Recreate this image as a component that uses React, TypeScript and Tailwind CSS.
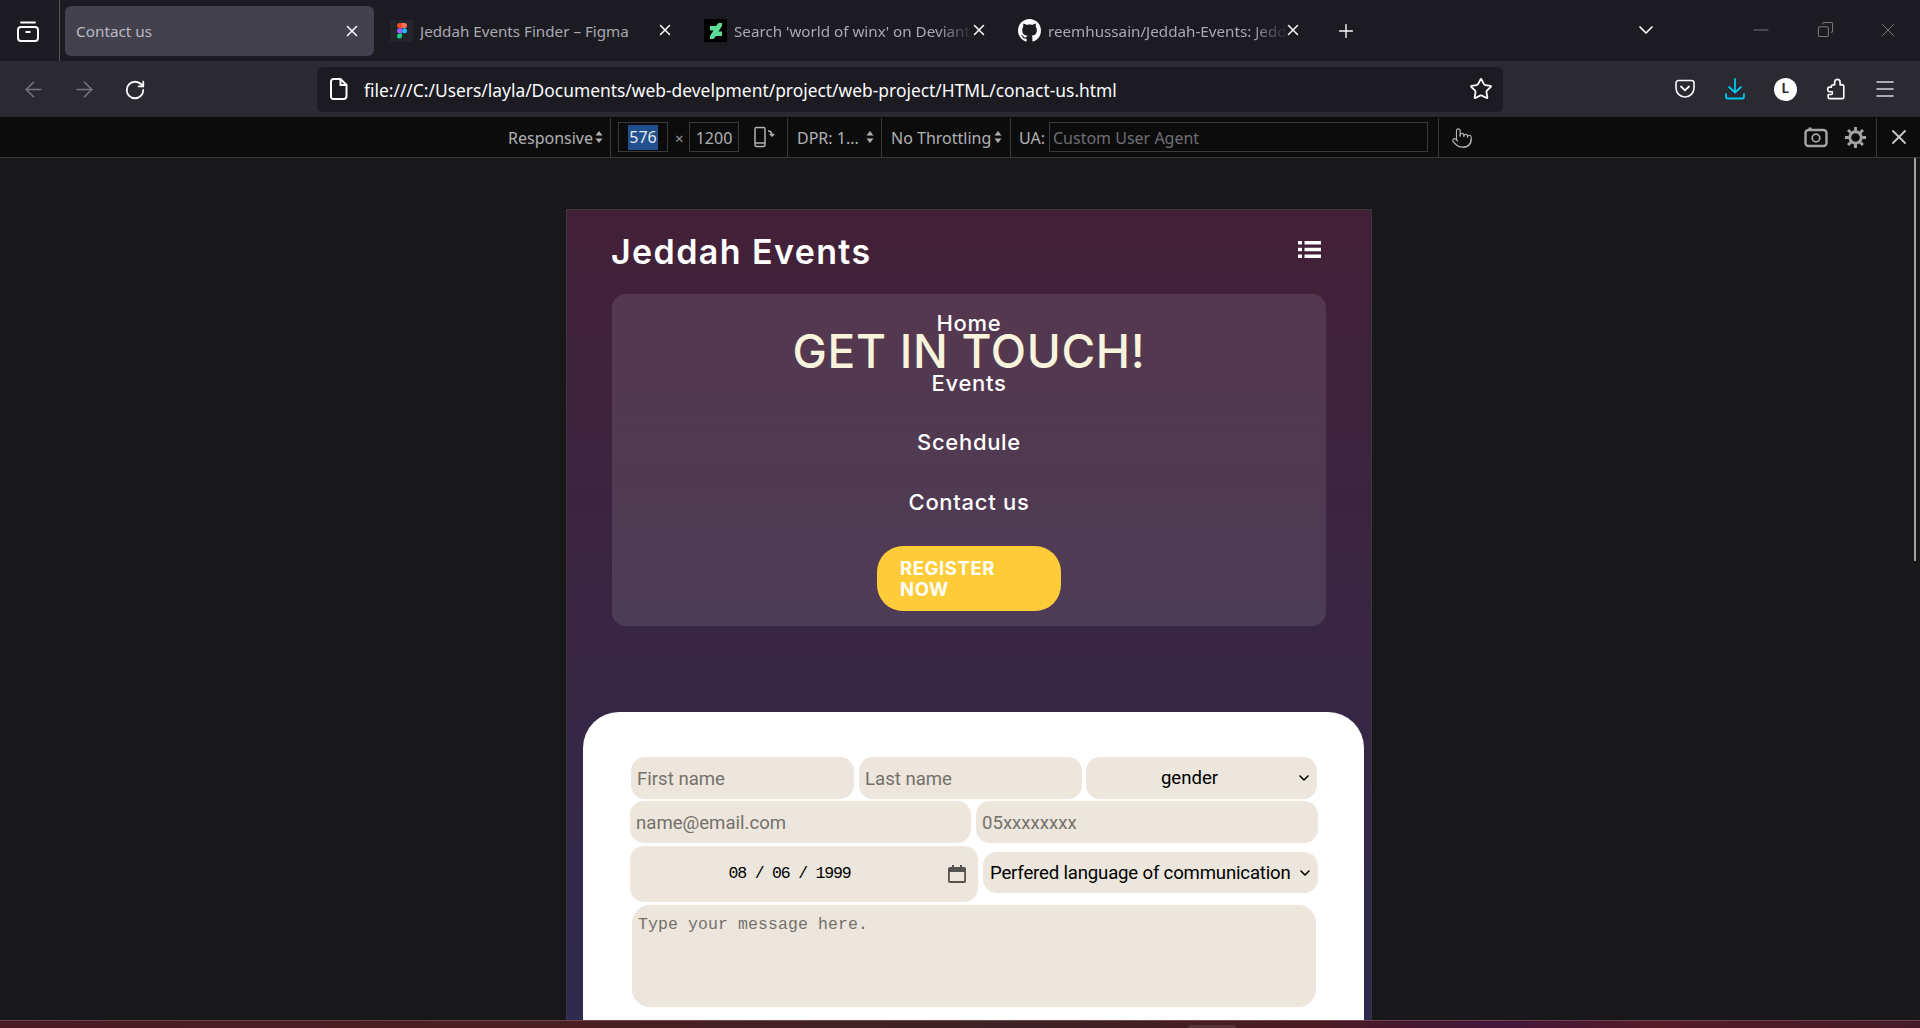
import { ChevronDown, Copy, Minus, Plus, RotateCw, Star, X, ArrowLeft, ArrowRight, Menu, Pointer } from "lucide-react";

const ui = { fontFamily: '"Noto Sans", "Open Sans", sans-serif' };
const narrow = { fontFamily: 'Roboto, "Noto Sans", sans-serif' };
const mono = { fontFamily: '"Liberation Mono", "DejaVu Sans Mono", monospace' };
const display = { fontFamily: 'Inter, "Open Sans", sans-serif' };

const UpDown = () => (
  <svg width="8" height="14" viewBox="0 0 8 14" fill="#b1b1b3" className="shrink-0">
    <path d="M4 1l3.500 4.500h-7zM4 13L.5 8.500h7z" />
  </svg>
);

const Divider = () => <div className="w-px h-[39px] bg-[#38383d] shrink-0" />;

const TabsIcon = () => (
  <svg width="24" height="24" viewBox="0 0 24 24" fill="none" stroke="#fbfbfe" strokeWidth="2" className="shrink-0">
    <path d="M5 3.500h14" strokeLinecap="round" />
    <rect x="2" y="8" width="20" height="14" rx="3" />
    <path d="M9.500 13h5" />
  </svg>
);

const FigmaIcon = () => (
  <div className="w-[23px] h-[22px] bg-[#24252a] flex items-center justify-center shrink-0">
    <svg width="10" height="16" viewBox="0 0 10 16">
      <path d="M2.500 0H5v5H2.500a2.500 2.500 0 010-5z" fill="#f24e1e" />
      <path d="M5 0h2.500a2.500 2.500 0 010 5H5z" fill="#ff7262" />
      <path d="M2.500 5.200H5v5H2.500a2.500 2.500 0 010-5z" fill="#a259ff" />
      <circle cx="7.500" cy="7.700" r="2.500" fill="#1abcfe" />
      <path d="M2.500 10.500H5V13a2.500 2.500 0 11-2.500-2.500z" fill="#0acf83" />
    </svg>
  </div>
);

const DeviantIcon = () => (
  <div className="w-[23px] h-[23px] bg-black flex items-center justify-center shrink-0">
    <svg width="12" height="16" viewBox="0 0 12 16" fill="#5fdc96">
      <path d="M12 0v3L8.500 8.500H12V13H6L3.500 16H0v-3l3.500-5.500H0V3h6l2.500-3z" />
    </svg>
  </div>
);

const GithubIcon = () => (
  <svg width="23" height="23" viewBox="0 0 16 16" fill="#fbfbfe" className="shrink-0">
    <path d="M8 0C3.580 0 0 3.580 0 8c0 3.540 2.290 6.530 5.470 7.590.4.070.55-.17.55-.38 0-.19-.01-.82-.01-1.490-2.010.37-2.530-.49-2.690-.94-.09-.23-.48-.94-.82-1.130-.28-.15-.68-.52-.01-.53.630-.01 1.080.58 1.230.82.720 1.210 1.870.870 2.330.660.070-.520.280-.870.510-1.070-1.780-.200-3.640-.890-3.640-3.950 0-.870.310-1.590.820-2.150-.080-.200-.360-1.020.080-2.120 0 0 .670-.210 2.200.820.640-.180 1.320-.270 2-.270s1.360.090 2 .270c1.530-1.040 2.200-.820 2.200-.820.440 1.100.160 1.920.080 2.120.510.560.820 1.270.820 2.150 0 3.070-1.870 3.750-3.650 3.950.290.250.540.730.540 1.480 0 1.070-.010 1.930-.010 2.200 0 .210.150.460.550.380A8.010 8.010 0 0016 8c0-4.420-3.580-8-8-8z" />
  </svg>
);

const tabs = [
  { title: "Jeddah Events Finder – Figma", icon: <FigmaIcon />, fade: false },
  { title: "Search 'world of winx' on DeviantArt", icon: <DeviantIcon />, fade: true },
  { title: "reemhussain/Jeddah-Events: Jeddah Events", icon: <GithubIcon />, fade: true },
];

const TabBar = () => (
  <div className="h-[61px] bg-[#1c1b22] flex items-stretch shrink-0">
    <div className="w-[60px] shrink-0 flex items-center justify-center border-r border-[#55555a] pr-[3px]">
      <TabsIcon />
    </div>
    <div className="w-[309px] h-[50px] mt-[6px] ml-[5px] mr-[16px] rounded-[6px] bg-[#42414d] flex items-center pl-[11px] pr-[13px] shrink-0">
      <span className="text-[15.300px] text-[#b9b9c2] flex-1">Contact us</span>
      <X size={18} className="text-[#fbfbfe]" />
    </div>
    {tabs.map((t) => (
      <div key={t.title} className="w-[314px] flex items-center shrink-0 pr-[44px] relative">
        {t.icon}
        <span className={`ml-[7px] pt-[2px] text-[15.200px] text-[#a9a9b0] whitespace-nowrap overflow-hidden flex-1 ${t.fade ? "[mask-image:linear-gradient(to_right,black_85%,transparent)]" : ""}`}>
          {t.title}
        </span>
        <X size={18} className="text-[#fbfbfe] absolute left-[266px] top-[21px]" />
      </div>
    ))}
    <div className="flex items-center ml-[4px] shrink-0 w-[28px]">
      <Plus size={22} strokeWidth={1.500} className="text-[#fbfbfe] -ml-[1px]" />
    </div>
    <div className="flex items-center ml-[270px] shrink-0 -mt-[2px]">
      <ChevronDown size={24} strokeWidth={1.700} className="text-[#fbfbfe]" />
    </div>
    <div className="flex items-center ml-[91px] gap-[44px] text-[#77777c] -mt-[2px]">
      <Minus size={24} strokeWidth={1} />
      <Copy size={17} strokeWidth={1.500} className="-scale-x-100" />
      <X size={24} strokeWidth={1} className="ml-[-2px]" />
    </div>
  </div>
);

const NavBar = () => (
  <div className="h-[56px] bg-[#2b2a33] flex items-center shrink-0">
    <ArrowLeft size={25} strokeWidth={1.500} className="text-[#77767e] ml-[21px] mt-[1px]" />
    <ArrowRight size={25} strokeWidth={1.500} className="text-[#77767e] ml-[26px] mt-[1px]" />
    <RotateCw size={22} strokeWidth={2} className="text-[#fbfbfe] ml-[27px] mt-[1px]" />
    <div className="w-[1186px] h-[45px] ml-[171px] rounded-[6px] bg-[#1c1b22] flex items-center shrink-0">
      <svg width="18" height="22" viewBox="0 0 18 22" fill="none" stroke="#fbfbfe" strokeWidth="2" className="ml-[13px] shrink-0">
        <path d="M3.500 1h7l6 6v11a3 3 0 01-3 3h-10a2.500 2.500 0 01-2.500-3V3.500A2.500 2.500 0 013.500 1z" />
        <path d="M10.500 1v6h6" />
      </svg>
      <span className="ml-[16px] pt-[2px] text-[17.400px] text-[#fbfbfe] whitespace-nowrap flex-1">file:///C:/Users/layla/Documents/web-develpment/project/web-project/HTML/conact-us.html</span>
      <Star size={24} strokeWidth={1.800} className="text-[#fbfbfe] mr-[10px]" />
    </div>
    <svg width="20" height="20" viewBox="0 0 20 20" fill="none" stroke="#fbfbfe" strokeWidth="1.600" className="ml-[172px] shrink-0">
      <path d="M1 4a2.500 2.500 0 012.500-2.500h13A2.500 2.500 0 0119 4v5a9 9 0 01-18 0z" />
      <path d="M6 7.500l4 3.800 4-3.800" strokeWidth="1.800" strokeLinecap="round" />
    </svg>
    <svg width="20" height="22" viewBox="0 0 20 22" fill="none" stroke="#00c7ec" strokeWidth="1.800" className="ml-[30px] shrink-0">
      <path d="M10 1v13M4 9l6 5.500L16 9" strokeLinecap="round" strokeLinejoin="round" />
      <path d="M1 16v2.500A2 2 0 003 20.500h14a2 2 0 002-2V16" strokeLinecap="round" />
    </svg>
    <div className="w-[23px] h-[23px] ml-[29px] rounded-full bg-white flex items-center justify-center shrink-0">
      <span className="text-[13px] font-bold text-[#2b2a33]" style={display}>L</span>
    </div>
    <svg width="22" height="24" viewBox="0 0 24 24" fill="none" stroke="#fbfbfe" strokeWidth="1.800" strokeLinejoin="round" className="ml-[28px] shrink-0">
      <path d="M9 7.500h1.500v-3a3 3 0 016 0v3H19A1.500 1.500 0 0120.500 9v12a1.500 1.500 0 01-1.500 1.500H5A1.500 1.500 0 013.500 21v-3H7a1 1 0 001-1v-2H5a2 2 0 01-2-2v-1a2 2 0 012-2h2V9a1.500 1.500 0 012-1.500z" />
    </svg>
    <Menu size={24} strokeWidth={1.600} className="text-[#d6d6da] ml-[26px]" />
  </div>
);

const CameraIcon = () => (
  <svg width="24" height="22" viewBox="0 0 24 22" fill="none" stroke="#a5a5a8" strokeWidth="2.400" className="ml-[331px] shrink-0">
    <rect x="1.500" y="4" width="21" height="16" rx="3" />
    <circle cx="12" cy="12" r="3.800" strokeWidth="1.800" />
    <path d="M4.500 2.500h3" strokeWidth="2" />
  </svg>
);

const GearIcon = () => (
  <svg width="23" height="23" viewBox="0 0 24 24" fill="none" stroke="#a5a5a8" className="ml-[16px] shrink-0">
    <circle cx="12" cy="12" r="6" strokeWidth="3" />
    <path d="M12 1v4M12 19v4M1 12h4M19 12h4M4.200 4.200l2.900 2.900M16.900 16.900l2.900 2.900M4.200 19.800l2.900-2.900M16.900 7.100l2.900-2.900" strokeWidth="3" />
  </svg>
);

const DevBar = () => (
  <div className="h-[41px] bg-[#0c0c0d] border-b border-[#38383d] flex items-center shrink-0 text-[16px] text-[#b1b1b3]">
    <span className="ml-[508px] pt-[2px] w-[87px] shrink-0">Responsive</span>
    <UpDown />
    <div className="ml-[7px]"><Divider /></div>
    <div className="ml-[7px] w-[50px] h-[30px] border border-[#38383d] flex items-center justify-center shrink-0">
      <span className="bg-[#20508f] text-[#e8e8ea] px-[1px] leading-[25px]">576</span>
    </div>
    <span className="ml-[7px] w-[14px] text-[15px] text-[#9a9a9f] shrink-0 pt-[2px]">×</span>
    <div className="w-[50px] h-[30px] border border-[#38383d] flex items-center justify-center shrink-0 pt-[2px]">1200</div>
    <svg width="22" height="22" viewBox="0 0 22 22" fill="none" stroke="#b1b1b3" strokeWidth="1.500" className="ml-[14px] shrink-0">
      <rect x="2" y="1.500" width="10" height="19" rx="1.500" />
      <path d="M2 17h10" />
      <path d="M15 5c3 0 4 2 4 4.500M17 8l2 2 2-2" />
    </svg>
    <div className="ml-[12px]"><Divider /></div>
    <span className="ml-[9px] pt-[2px] w-[69px] shrink-0">DPR: 1...</span>
    <UpDown />
    <div className="ml-[7px]"><Divider /></div>
    <span className="ml-[9px] pt-[2px] w-[103px] shrink-0 whitespace-nowrap">No Throttling</span>
    <UpDown />
    <div className="ml-[8px]"><Divider /></div>
    <span className="ml-[8px] pt-[2px] w-[30px] shrink-0">UA:</span>
    <div className="w-[379px] h-[30px] border border-[#38383d] flex items-center pl-[3px] pt-[2px] text-[#6f6f74] shrink-0">Custom User Agent</div>
    <div className="ml-[10px]"><Divider /></div>
    <Pointer size={22} strokeWidth={1.300} className="ml-[12px] text-[#b1b1b3] mt-[2px]" />
    <CameraIcon />
    <GearIcon />
    <div className="ml-[9px]"><Divider /></div>
    <X size={24} strokeWidth={1.800} className="ml-[10px] text-[#c8c8cb]" />
  </div>
);

const fieldClass = "bg-[#ece6dc] rounded-[14px] px-[6px] pt-[3px] text-[18.600px] text-black placeholder:text-[#75716a] outline-none shrink-0";

const SelectBox = ({ label, className, center }: { label: string; className: string; center?: boolean }) => (
  <div className={`relative bg-[#ece6dc] rounded-[14px] flex items-center text-[18.600px] text-black shrink-0 ${className}`} style={narrow}>
    <span className={`whitespace-nowrap ${center ? "flex-1 text-center pr-[24px] pt-[1px]" : "pl-[7px] pt-[2px] tracking-[-0.180px]"}`}>{label}</span>
    <ChevronDown size={16} strokeWidth={2.400} className="absolute right-[5px] top-1/2 -translate-y-1/2 text-black" />
  </div>
);

const ContactForm = () => (
  <div className="w-[781px] ml-[16px] h-[400px] bg-white rounded-t-[36px] pt-[45px] pl-[47px] flex flex-col shrink-0" style={ui}>
    <div className="flex gap-[5px] ml-[1px] h-[42px]">
      <input placeholder="First name" className={`${fieldClass} w-[223px]`} style={narrow} />
      <input placeholder="Last name" className={`${fieldClass} w-[223px]`} style={narrow} />
      <SelectBox label="gender" center className="w-[231px] -ml-[1px]" />
    </div>
    <div className="flex gap-[5px] h-[42px] mt-[2px]">
      <input placeholder="name@email.com" className={`${fieldClass} w-[341px]`} style={narrow} />
      <input placeholder="05xxxxxxxx" className={`${fieldClass} w-[342px]`} style={narrow} />
    </div>
    <div className="flex gap-[5px] h-[56px] mt-[3px] items-start">
      <div className="relative w-[348px] h-[56px] bg-[#ece6dc] rounded-[14px] flex items-center justify-center shrink-0 text-[16.500px] text-black pr-[29px]" style={mono}>
        <span className="tracking-[-1.200px]">08 / 06 / 1999</span>
        <svg width="18" height="18" viewBox="0 0 18 18" fill="#55534f" className="absolute right-[12px] top-[19px]">
          <path d="M4 0h2v2h6V0h2v2h1.500A2 2 0 0118 4v12a2 2 0 01-2 2H2a2 2 0 01-2-2V4a2 2 0 012-2h2zM1.800 7v9h14.400V7z" />
        </svg>
      </div>
      <SelectBox label="Perfered language of communication" className="w-[335px] h-[41px] mt-[6px]" />
    </div>
    <textarea
      placeholder="Type your message here."
      className="w-[684px] h-[102px] ml-[2px] mt-[3px] bg-[#ece6dc] rounded-[18px] px-[6px] pt-[8px] text-[16.500px] tracking-[0.100px] placeholder:text-[#75716a] outline-none resize-none shrink-0"
      style={mono}
    />
  </div>
);

const navItems = ["Home", "Events", "Scehdule", "Contact us"];

const PageViewport = () => (
  <div className="ml-[566px] mt-[51px] w-[806px] h-[812px] overflow-hidden border-x border-t border-[#38383d] bg-gradient-to-b from-[#432038] to-[#2e2a4e] shrink-0" style={display}>
    <div className="h-[84px] pl-[44px] pr-[50px] flex items-start justify-between">
      <span className="text-[34px] font-semibold text-white mt-[20px] leading-[44px] tracking-[1.400px]">Jeddah Events</span>
      <svg width="23" height="17" viewBox="0 0 23 17" fill="#fff" className="mt-[31px]">
        <rect x="0" y="0" width="4" height="3.500" />
        <rect x="0" y="6.750" width="4" height="3.500" />
        <rect x="0" y="13.500" width="4" height="3.500" />
        <rect x="6.500" y="0" width="16.500" height="3.500" />
        <rect x="6.500" y="6.750" width="16.500" height="3.500" />
        <rect x="6.500" y="13.500" width="16.500" height="3.500" />
      </svg>
    </div>
    <div className="relative w-[714px] h-[332px] ml-[45px] rounded-[14px] bg-white/10 flex flex-col items-center pt-[14px]">
      {navItems.map((n) => (
        <div key={n} className="h-[30px] mb-[29.500px] text-[22px] font-medium text-white leading-[30px] tracking-[0.700px]">{n}</div>
      ))}
      <div className="absolute left-0 right-0 top-[30px] text-center text-[46px] font-medium text-[#f7f3dc] leading-[54px] tracking-[0.700px]">GET IN TOUCH!</div>
      <div className="w-[184px] h-[65px] rounded-[26px] bg-[#ffcc39] pl-[23px] pt-[12px] text-[18.500px] font-bold text-white leading-[21px] tracking-[0.600px] -mt-[0.500px]">
        REGISTER<br />NOW
      </div>
    </div>
    <div className="mt-[86px]">
      <ContactForm />
    </div>
  </div>
);

export default function App() {
  return (
    <div className="relative w-[1920px] h-[1028px] overflow-hidden bg-[#18181a] flex flex-col" style={ui}>
      <TabBar />
      <NavBar />
      <DevBar />
      <PageViewport />
      {/* page scrollbar */}
      <div className="absolute right-[4px] top-[158px] w-[2px] h-[403px] bg-[#a0a0a0]" />
      {/* start of the desktop taskbar */}
      <div className="absolute left-0 right-0 bottom-0 h-[8px] border-t border-[#6a4a50] bg-[linear-gradient(to_right,#4a1a24_0%,#4a1f22_30%,#3c2226_52%,#4a1a22_68%,#42163a_78%,#541a28_86%,#451a28_100%)]">
        <div className="absolute left-[1188px] bottom-0 w-[48px] h-[3px] rounded-t-[3px] bg-white/10" />
      </div>
    </div>
  );
}
